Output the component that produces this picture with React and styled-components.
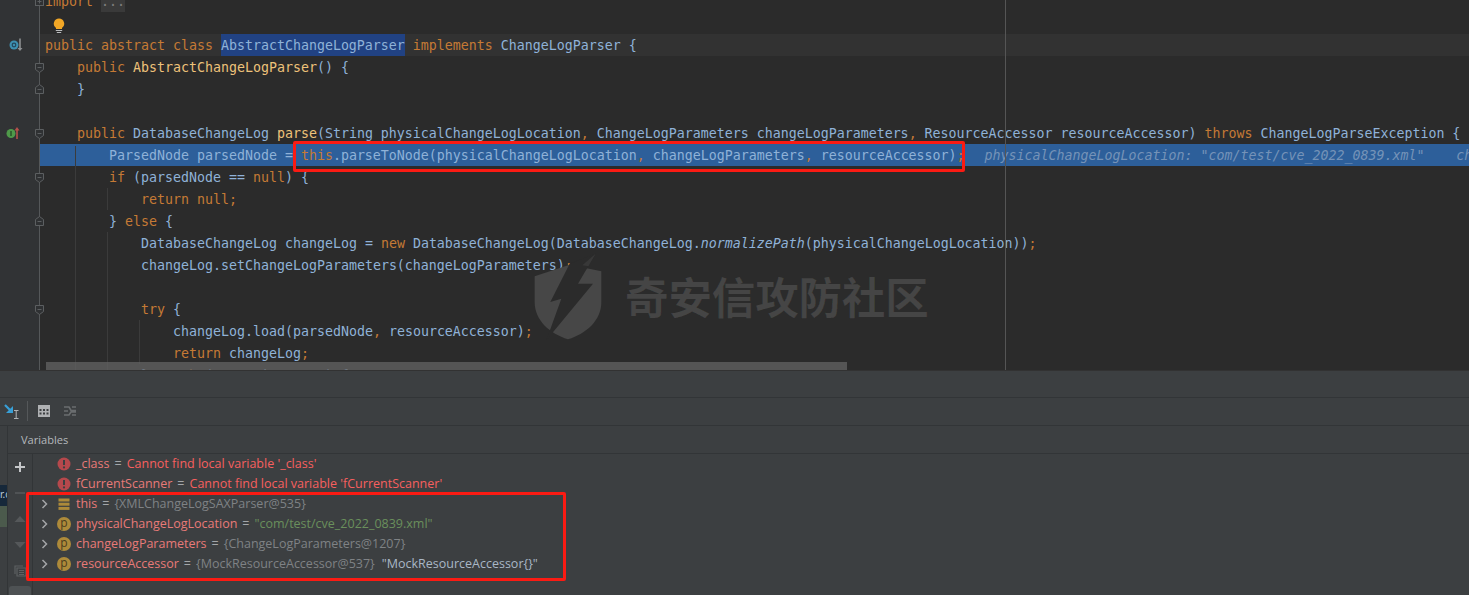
import React from 'react';
import styled, { createGlobalStyle } from 'styled-components';

const GlobalStyle = createGlobalStyle`
  html, body { margin: 0; padding: 0; background: #3c3f41; }
  * { box-sizing: border-box; }
`;

const KEYWORDS = 'public|abstract|class|implements|throws|new|if|else|return|null|try|catch|this|import';

const CODE = [
  { indent: 0, text: 'import ', folded: '...', fold: 'plus' },
  { indent: 0, text: '', bulb: true },
  { indent: 0, text: 'public abstract class ', selected: 'AbstractChangeLogParser', after: ' implements ChangeLogParser {', caret: true, mark: 'down' },
  { indent: 1, text: 'public AbstractChangeLogParser() {', methods: ['AbstractChangeLogParser'], fold: 'open' },
  { indent: 1, text: '}', fold: 'close' },
  { indent: 0, text: '' },
  { indent: 1, text: 'public DatabaseChangeLog parse(String physicalChangeLogLocation, ChangeLogParameters changeLogParameters, ResourceAccessor resourceAccessor) throws ChangeLogParseException {', methods: ['parse'], fold: 'open', mark: 'up' },
  { indent: 2, text: 'ParsedNode parsedNode = this.parseToNode(physicalChangeLogLocation, changeLogParameters, resourceAccessor);', exec: true, hint: 'physicalChangeLogLocation: "com/test/cve_2022_0839.xml"    changeLogParameters: ChangeLogParameters@1207' },
  { indent: 2, text: 'if (parsedNode == null) {', fold: 'open' },
  { indent: 3, text: 'return null;' },
  { indent: 2, text: '} else {', fold: 'close' },
  { indent: 3, text: 'DatabaseChangeLog changeLog = new DatabaseChangeLog(DatabaseChangeLog.normalizePath(physicalChangeLogLocation));', italics: ['normalizePath'] },
  { indent: 3, text: 'changeLog.setChangeLogParameters(changeLogParameters);' },
  { indent: 0, text: '' },
  { indent: 3, text: 'try {', fold: 'open' },
  { indent: 4, text: 'changeLog.load(parsedNode, resourceAccessor);' },
  { indent: 4, text: 'return changeLog;' },
  { indent: 3, text: '} catch (Exception var8) {' },
];

const GUIDES = [
  { x: 35, top: 146, height: 224 },
  { x: 67, top: 188, height: 22 },
  { x: 67, top: 232, height: 138 },
  { x: 99, top: 320, height: 44 },
];

const VARIABLES = [
  { icon: 'error', name: '_class', error: "Cannot find local variable '_class'" },
  { icon: 'error', name: 'fCurrentScanner', error: "Cannot find local variable 'fCurrentScanner'" },
  { icon: 'field', name: 'this', value: '{XMLChangeLogSAXParser@535}', arrow: true },
  { icon: 'param', name: 'physicalChangeLogLocation', string: '"com/test/cve_2022_0839.xml"', arrow: true },
  { icon: 'param', name: 'changeLogParameters', value: '{ChangeLogParameters@1207}', arrow: true },
  { icon: 'param', name: 'resourceAccessor', value: '{MockResourceAccessor@537}', plain: '"MockResourceAccessor{}"', arrow: true },
];

const renderCode = (text, methods = [], italics = []) => {
  const extra = [...methods, ...italics].join('|');
  const re = new RegExp(`(\\b(?:${KEYWORDS}${extra ? '|' + extra : ''})\\b|[,;])`);
  return text.split(re).map((part, i) => {
    if (!part) return null;
    if (methods.includes(part)) return <Method key={i}>{part}</Method>;
    if (italics.includes(part)) return <Italic key={i}>{part}</Italic>;
    if (i % 2 === 1) return <Keyword key={i}>{part}</Keyword>;
    return <span key={i}>{part}</span>;
  });
};

const FoldMark = ({ type }) => (
  <FoldIcon width="11" height="11" viewBox="0 0 11 11" fill="#2f3133" stroke="#5c5f61">
    {type === 'plus' && <rect x="1.5" y="1.5" width="8" height="8" />}
    {type === 'open' && <path d="M1.5 1.5h8v6l-4 3-4-3z" />}
    {type === 'close' && <path d="M1.5 9.5h8v-6l-4-3-4 3z" />}
    <path d="M3.5 5.5h4" />
    {type === 'plus' && <path d="M5.5 3.5v4" />}
  </FoldIcon>
);

const GutterMark = ({ type }) =>
  type === 'down' ? (
    <MarkIcon $left={9} width="16" height="16" viewBox="0 0 16 16">
      <circle cx="5" cy="8" r="4.5" fill="#3d8fb0" />
      <circle cx="5" cy="8" r="1.8" fill="none" stroke="#24465a" strokeWidth="1.2" />
      <path d="M11 1.5v10" stroke="#8d9092" strokeWidth="1.6" />
      <path d="M8.5 11h5L11 14z" fill="#8d9092" />
    </MarkIcon>
  ) : (
    <MarkIcon $left={6} width="16" height="16" viewBox="0 0 16 16">
      <circle cx="5" cy="8.5" r="4.5" fill="#4f9a4a" />
      <path d="M5 6v5" stroke="#234a22" strokeWidth="1.3" />
      <path d="M11 14V5" stroke="#b5514b" strokeWidth="1.6" />
      <path d="M8.5 5.5h5L11 2z" fill="#b5514b" />
    </MarkIcon>
  );

const Bulb = () => (
  <BulbIcon width="12" height="16" viewBox="0 0 12 16">
    <path d="M6 .5a5.3 5.3 0 0 0-3 9.6V11h6v-.9A5.3 5.3 0 0 0 6 .5z" fill="#f2a726" />
    <path d="M2.8 12.5h6.4M3.8 14.5h4.4" stroke="#b9bbbd" strokeWidth="1" />
  </BulbIcon>
);

const VarIcon = ({ type }) => {
  if (type === 'error') {
    return (
      <svg width="14" height="14" viewBox="0 0 14 14">
        <circle cx="7" cy="7" r="6.5" fill="#b5484c" />
        <path d="M7 3v5" stroke="#3c3f41" strokeWidth="2" />
        <circle cx="7" cy="10.4" r="1.1" fill="#3c3f41" />
      </svg>
    );
  }
  if (type === 'field') {
    return (
      <svg width="14" height="14" viewBox="0 0 14 14" fill="#ad8a3a">
        <rect x="1.5" y="1.5" width="11" height="3" />
        <rect x="1.5" y="5.7" width="11" height="3" />
        <rect x="1.5" y="9.9" width="11" height="3" />
      </svg>
    );
  }
  return <ParamBadge>p</ParamBadge>;
};

const Chevron = () => (
  <svg width="8" height="10" viewBox="0 0 8 10" fill="none" stroke="#a4a6a8" strokeWidth="1.5">
    <path d="M1.5 1l4 4-4 4" />
  </svg>
);

const Logo = () => (
  <LogoSvg width="70" height="90" viewBox="0 0 210 270">
    <path d="M5 73 L110 38 L205 58 L205 150 C205 205 160 245 105 262 C50 245 5 205 5 150 Z" fill="#474747" />
    <path d="M188 5 L135 95 L180 95 L40 265 L85 140 L52 150 L110 35 Z" fill="#2b2b2b" />
    <path d="M188 5 L166 43 L148 40 Z" fill="#383838" />
  </LogoSvg>
);

const App = () => (
  <Page>
    <GlobalStyle />
    <Editor>
      <Gutter>
        {CODE.map((line, i) => (
          <GutterRow key={i}>
            {line.mark && <GutterMark type={line.mark} />}
            {line.fold && <FoldMark type={line.fold} />}
          </GutterRow>
        ))}
      </Gutter>
      <CodeArea>
        {CODE.map((line, i) => (
          <CodeLine key={i} $indent={line.indent} $exec={line.exec} $caret={line.caret}>
            {line.bulb && <Bulb />}
            {renderCode(line.text, line.methods, line.italics)}
            {line.folded && <Folded>{line.folded}</Folded>}
            {line.selected && <Selected>{line.selected}</Selected>}
            {line.after && renderCode(line.after)}
            {line.hint && <Hint>{line.hint}</Hint>}
          </CodeLine>
        ))}
        {GUIDES.map((g, i) => (
          <IndentGuide key={i} $x={g.x} $top={g.top} $height={g.height} />
        ))}
        <RightMargin />
        <ScrollThumb />
        <RedBox $left={253} $top={141} $width={672} $height={31} />
      </CodeArea>
      <Watermark>
        <Logo />
        <WatermarkText>奇安信攻防社区</WatermarkText>
      </Watermark>
    </Editor>

    <BlankBar />
    <DebugToolbar>
      <svg width="20" height="20" viewBox="0 0 20 20">
        <path d="M4 4l6 6" stroke="#389fd6" strokeWidth="2.2" fill="none" />
        <path d="M12 5v7H5z" fill="#389fd6" />
        <path d="M13 9.5h4.5M15.2 9.5v8M13 17.5h4.5" stroke="#b0b2b4" strokeWidth="1" fill="none" />
      </svg>
      <ToolbarSeparator />
      <TableIcon width="14" height="14" viewBox="0 0 14 14" fill="#afb1b3">
        <path d="M1 1h12v12H1zM2.5 5v2h2V5zm3.5 0v2h2V5zm3.5 0v2h2V5zm-7 3.5v2h2v-2zm3.5 0v2h2v-2zm3.5 0v2h2v-2z" fillRule="evenodd" />
      </TableIcon>
      <DimIcon width="14" height="12" viewBox="0 0 14 12" stroke="#6a6d6f" strokeWidth="1.6" fill="none">
        <path d="M1 2h5l2 3.5h5M1 10h5l2-3h5M9 2h4M1 6h4M9 10h4" />
      </DimIcon>
    </DebugToolbar>

    <DebugBody>
      <SideStrip>
        <StripDark>r.c</StripDark>
        <StripGreen />
      </SideStrip>
      <VariablesPane>
        <PaneTitle>Variables</PaneTitle>
        <PaneBody>
          <SideBar>
            <SideButton>
              <svg width="12" height="12" viewBox="0 0 12 12" stroke="#c4c6c8" strokeWidth="2">
                <path d="M6 1v10M1 6h10" />
              </svg>
            </SideButton>
            <SideButton>
              <svg width="12" height="12" viewBox="0 0 12 12" stroke="#505355" strokeWidth="2">
                <path d="M1 6h10" />
              </svg>
            </SideButton>
            <SideButton>
              <svg width="12" height="8" viewBox="0 0 12 8" fill="#55585a">
                <path d="M6 1l5.5 6H.5z" />
              </svg>
            </SideButton>
            <SideButton>
              <svg width="12" height="8" viewBox="0 0 12 8" fill="#55585a">
                <path d="M6 7L.5 1h11z" />
              </svg>
            </SideButton>
            <SideButton>
              <svg width="13" height="13" viewBox="0 0 13 13" fill="none" stroke="#5d6062" strokeWidth="1.2">
                <path d="M1 9V1h8M3 11V3h9v8zM5 5.5h5M5 7.5h5M5 9.5h5" />
              </svg>
            </SideButton>
            <SettingsButton />
          </SideBar>
          <VarList>
            {VARIABLES.map((v) => (
              <VarRow key={v.name}>
                <ArrowSlot>{v.arrow && <Chevron />}</ArrowSlot>
                <IconSlot>
                  <VarIcon type={v.icon} />
                </IconSlot>
                <VarName>{v.name}</VarName>
                <Equals>=</Equals>
                {v.error && <VarError>{v.error}</VarError>}
                {v.value && <VarValue>{v.value}</VarValue>}
                {v.string && <VarString>{v.string}</VarString>}
                {v.plain && <VarPlain>{v.plain}</VarPlain>}
              </VarRow>
            ))}
            <RedBox $left={-7} $top={38} $width={540} $height={89} />
          </VarList>
        </PaneBody>
      </VariablesPane>
    </DebugBody>
  </Page>
);

export default App;

const Page = styled.div`
  width: 1469px;
  height: 595px;
  overflow: hidden;
  display: flex;
  flex-direction: column;
  background: #3c3f41;
`;

const Editor = styled.div`
  position: relative;
  display: flex;
  flex: 0 0 371px;
  overflow: hidden;
  background: #2b2b2b;
  border-bottom: 1px solid #323232;
`;

const Gutter = styled.div`
  position: relative;
  z-index: 1;
  flex: 0 0 40px;
  height: 370px;
  background: #313335;
  border-right: 1px solid #55585a;

  & > :first-child {
    margin-top: -10px;
  }
`;

const GutterRow = styled.div`
  position: relative;
  height: 22px;
`;

const FoldIcon = styled.svg`
  position: absolute;
  right: -6px;
  top: 6px;
`;

const MarkIcon = styled.svg`
  position: absolute;
  left: ${(p) => p.$left}px;
  top: 3px;
`;

const CodeArea = styled.div`
  position: relative;
  flex: 1;
  min-width: 0;
  height: 370px;
  overflow: hidden;

  & > :first-child {
    margin-top: -10px;
  }
`;

const CodeLine = styled.div`
  position: relative;
  height: 22px;
  padding-top: 1px;
  line-height: 22px;
  padding-left: ${(p) => 5 + p.$indent * 32}px;
  font-family: "DejaVu Sans Mono", monospace;
  font-size: 13.29px;
  white-space: pre;
  color: #8fb2d8;
  background: ${(p) => (p.$exec ? '#2d5f9a' : p.$caret ? '#323232' : 'transparent')};
`;

const Keyword = styled.span`
  color: #c57a35;
`;

const Method = styled.span`
  color: #eec27a;
`;

const Italic = styled.span`
  font-style: italic;
`;

const Folded = styled.span`
  color: #7d7d7d;
  background: #3a3a3a;
  padding: 3px 0;
`;

const Selected = styled.span`
  display: inline-block;
  height: 21px;
  background: #214283;
  box-shadow: 0 -1px 0 #214283;
`;

const Hint = styled.span`
  margin-left: 20px;
  font-style: italic;
  color: #7593b8;
`;

const BulbIcon = styled.svg`
  position: absolute;
  left: 13px;
  top: 6px;
`;

const IndentGuide = styled.div`
  position: absolute;
  left: ${(p) => p.$x}px;
  top: ${(p) => p.$top}px;
  height: ${(p) => p.$height}px;
  width: 1px;
  background: #3b3b3b;
`;

const RightMargin = styled.div`
  position: absolute;
  left: 965px;
  top: 0;
  bottom: 0;
  width: 1px;
  background: #555;
`;

const ScrollThumb = styled.div`
  position: absolute;
  left: 6px;
  top: 362px;
  width: 801px;
  height: 8px;
  background: rgba(100, 100, 100, 0.75);
`;

const RedBox = styled.div`
  position: absolute;
  left: ${(p) => p.$left}px;
  top: ${(p) => p.$top}px;
  width: ${(p) => p.$width}px;
  height: ${(p) => p.$height}px;
  border: 3px solid #fb1b13;
  border-radius: 2px;
  pointer-events: none;
`;

const Watermark = styled.div`
  position: absolute;
  left: 533px;
  top: 252px;
  display: flex;
  align-items: center;
  gap: 22px;
  pointer-events: none;
`;

const LogoSvg = styled.svg`
  display: block;
  flex-shrink: 0;
`;

const WatermarkText = styled.span`
  margin-bottom: 4px;
  font-family: "Noto Sans CJK SC", sans-serif;
  font-size: 43.4px;
  font-weight: 700;
  line-height: 50px;
  white-space: nowrap;
  color: rgba(255, 255, 255, 0.12);
`;

const BlankBar = styled.div`
  flex: 0 0 27px;
  border-bottom: 1px solid #323537;
`;

const DebugToolbar = styled.div`
  flex: 0 0 28px;
  display: flex;
  align-items: center;
  padding: 0 0 2px 1px;
  border-bottom: 1px solid #323537;
`;

const ToolbarSeparator = styled.div`
  width: 1px;
  height: 20px;
  margin-left: 6px;
  background: #55585a;
`;

const TableIcon = styled.svg`
  margin-left: 9px;
`;

const DimIcon = styled.svg`
  margin-left: 12px;
`;

const DebugBody = styled.div`
  flex: 1;
  min-height: 0;
  display: flex;
`;

const SideStrip = styled.div`
  flex: 0 0 8px;
  padding-top: 59px;
  border-right: 1px solid #323537;
  overflow: hidden;
`;

const StripDark = styled.div`
  height: 21px;
  padding-top: 3px;
  background: #16283a;
  color: #b8c8d8;
  font-family: "Noto Sans", sans-serif;
  font-size: 10px;
  line-height: 12px;
  white-space: nowrap;
`;

const StripGreen = styled.div`
  height: 21px;
  background: #4b5a4c;
`;

const VariablesPane = styled.div`
  flex: 1;
  min-width: 0;
  display: flex;
  flex-direction: column;
`;

const PaneTitle = styled.div`
  flex: 0 0 28px;
  padding-left: 13px;
  line-height: 27px;
  font-family: "Open Sans", sans-serif;
  font-size: 11.1px;
  color: #b4b8bc;
  border-bottom: 1px solid #323537;
`;

const PaneBody = styled.div`
  flex: 1;
  min-height: 0;
  display: flex;
`;

const SideBar = styled.div`
  flex: 0 0 25px;
  display: flex;
  flex-direction: column;
  align-items: center;
  border-right: 1px solid #323537;
`;

const SideButton = styled.div`
  flex: 0 0 26px;
  width: 100%;
  display: flex;
  align-items: center;
  justify-content: center;
`;

const SettingsButton = styled.div`
  flex: 0 0 20px;
  width: 22px;
  margin-top: 2px;
  border-radius: 3px;
  background: #4e5254;
`;

const VarList = styled.div`
  position: relative;
  flex: 1;
  min-width: 0;
`;

const VarRow = styled.div`
  display: flex;
  align-items: center;
  height: 20px;
  white-space: pre;
  font-family: "Open Sans", sans-serif;
  font-size: 12.5px;
  line-height: 20px;
`;

const ArrowSlot = styled.div`
  flex: 0 0 19px;
  display: flex;
  justify-content: flex-end;
  padding-right: 3px;
`;

const IconSlot = styled.div`
  flex: 0 0 24px;
  display: flex;
  justify-content: center;
`;

const ParamBadge = styled.div`
  width: 14px;
  height: 14px;
  border-radius: 50%;
  background: #ad8a3a;
  color: #4a3c1c;
  font-size: 12px;
  line-height: 12px;
  text-align: center;
`;

const VarName = styled.span`
  color: #e87a78;
`;

const Equals = styled.span`
  margin: 0 5px;
  color: #a3a6a9;
`;

const VarError = styled.span`
  color: #f75f5f;
`;

const VarValue = styled.span`
  color: #7f8285;
`;

const VarString = styled.span`
  color: #6a8f5c;
`;

const VarPlain = styled.span`
  margin-left: 7px;
  color: #a9b7c6;
`;
